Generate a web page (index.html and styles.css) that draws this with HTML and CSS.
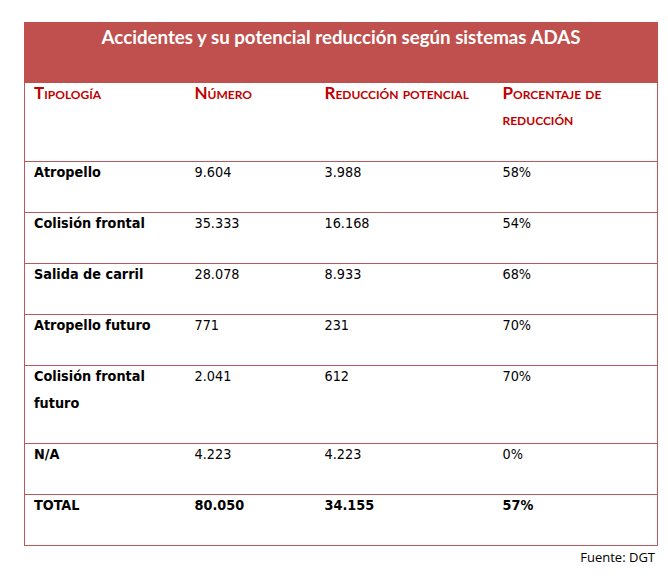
FILE: index.html
```html
<!DOCTYPE html>
<html lang="es">
<head>
<meta charset="utf-8">
<title>Accidentes y su potencial reducción según sistemas ADAS</title>
<link rel="stylesheet" href="styles.css">
</head>
<body>
<div class="page">
  <table class="adas">
    <colgroup>
      <col class="c1"><col class="c2"><col class="c3"><col class="c4">
    </colgroup>
    <thead>
      <tr class="title-row">
        <th colspan="4">Accidentes y su potencial reducción según sistemas ADAS</th>
      </tr>
      <tr class="head-row">
        <th><div class="cell">Tipología</div></th>
        <th><div class="cell">Número</div></th>
        <th><div class="cell">Reducción potencial</div></th>
        <th><div class="cell">Porcentaje de reducción</div></th>
      </tr>
    </thead>
    <tbody>
      <tr><td class="lbl"><div class="cell">Atropello</div></td><td><div class="cell">9.604</div></td><td><div class="cell">3.988</div></td><td><div class="cell">58%</div></td></tr>
      <tr><td class="lbl"><div class="cell">Colisión frontal</div></td><td><div class="cell">35.333</div></td><td><div class="cell">16.168</div></td><td><div class="cell">54%</div></td></tr>
      <tr><td class="lbl"><div class="cell">Salida de carril</div></td><td><div class="cell">28.078</div></td><td><div class="cell">8.933</div></td><td><div class="cell">68%</div></td></tr>
      <tr><td class="lbl"><div class="cell">Atropello futuro</div></td><td><div class="cell">771</div></td><td><div class="cell">231</div></td><td><div class="cell">70%</div></td></tr>
      <tr><td class="lbl"><div class="cell">Colisión frontal futuro</div></td><td><div class="cell">2.041</div></td><td><div class="cell">612</div></td><td><div class="cell">70%</div></td></tr>
      <tr><td class="lbl"><div class="cell">N/A</div></td><td><div class="cell">4.223</div></td><td><div class="cell">4.223</div></td><td><div class="cell">0%</div></td></tr>
      <tr class="total"><td><div class="cell">TOTAL</div></td><td><div class="cell">80.050</div></td><td><div class="cell">34.155</div></td><td><div class="cell">57%</div></td></tr>
    </tbody>
  </table>
  <p class="source">Fuente: DGT</p>
</div>
</body>
</html>
```
FILE: styles.css
```css
html, body {
  margin: 0;
  padding: 0;
  background: #ffffff;
}

.page {
  padding: 22px 11px 0 24px;
}

.adas {
  width: 633px;
  border-collapse: collapse;
  table-layout: fixed;
  font-family: "DejaVu Sans Condensed", "DejaVu Sans", sans-serif;
  font-size: 14.3px;
  color: #000;
}

.c1 { width: 161px; }
.c2 { width: 130px; }
.c3 { width: 178px; }
.c4 { width: 164px; }

.cell {
  margin-top: -3px;
}

.title-row th {
  background: #c0504d;
  color: #ffffff;
  font-family: Lato, "Open Sans", sans-serif;
  font-weight: bold;
  font-size: 18.7px;
  line-height: 22px;
  height: 60px;
  padding: 3px 0 0 0;
  vertical-align: top;
  text-align: center;
  border: 1px solid #c0504d;
  box-sizing: border-box;
}

.head-row th {
  font-family: Lato, "Open Sans", sans-serif;
  font-variant: small-caps;
  font-weight: bold;
  font-size: 17px;
  color: #c00000;
  text-align: left;
  vertical-align: top;
  line-height: 26px;
  height: 79px;
  padding: 0 4px 0 9px;
  box-sizing: border-box;
  border-bottom: 1px solid #b65a5e;
}

.head-row th:first-child {
  border-left: 1px solid #b65a5e;
}

.head-row th:last-child {
  border-right: 1px solid #b65a5e;
}

.adas td {
  vertical-align: top;
  text-align: left;
  line-height: 27px;
  padding: 0 8px 26px 9px;
  border-bottom: 1px solid #b65a5e;
}

.adas td:first-child {
  border-left: 1px solid #b65a5e;
}

.adas td:last-child {
  border-right: 1px solid #b65a5e;
}

.adas td.lbl,
.total td {
  font-weight: bold;
}

.source {
  width: 631px;
  margin: 3px 0 0 0;
  line-height: 16px;
  text-align: right;
  font-family: "Open Sans", Lato, sans-serif;
  font-size: 13px;
  color: #000;
}
```
